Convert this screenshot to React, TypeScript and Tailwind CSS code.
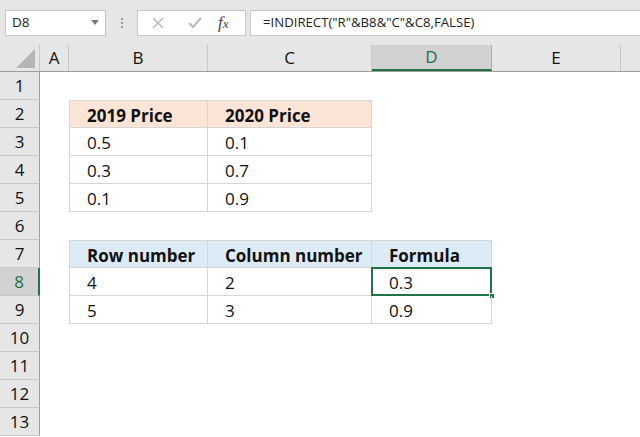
import { useState } from "react";

const COLS = [
  { key: "A", w: "w-[29px]" },
  { key: "B", w: "w-[139px]" },
  { key: "C", w: "w-[164px]" },
  { key: "D", w: "w-[120px]" },
  { key: "E", w: "w-[129px]" },
];

type Cell = { text?: string; bold?: boolean; bg?: string; border?: string };

// borders for the two little tables on the sheet
const T = "border-[#d6d6d6]";
const sheet: Record<number, Record<string, Cell>> = {
  2: {
    B: { text: "2019 Price", bold: true, bg: "bg-[#fce4d6]", border: `border-l border-t border-r border-b ${T}` },
    C: { text: "2020 Price", bold: true, bg: "bg-[#fce4d6]", border: `border-t border-r border-b ${T}` },
  },
  3: {
    B: { text: "0.5", border: `border-l border-r border-b ${T}` },
    C: { text: "0.1", border: `border-r border-b ${T}` },
  },
  4: {
    B: { text: "0.3", border: `border-l border-r border-b ${T}` },
    C: { text: "0.7", border: `border-r border-b ${T}` },
  },
  5: {
    B: { text: "0.1", border: `border-l border-r border-b ${T}` },
    C: { text: "0.9", border: `border-r border-b ${T}` },
  },
  7: {
    B: { text: "Row number", bold: true, bg: "bg-[#ddebf7]", border: `border-l border-t border-r border-b ${T}` },
    C: { text: "Column number", bold: true, bg: "bg-[#ddebf7]", border: `border-t border-r border-b ${T}` },
    D: { text: "Formula", bold: true, bg: "bg-[#ddebf7]", border: `border-t border-r border-b ${T}` },
  },
  8: {
    B: { text: "4", border: `border-l border-r border-b ${T}` },
    C: { text: "2", border: `border-r border-b ${T}` },
    D: { text: "0.3", border: `border-r border-b ${T}` },
  },
  9: {
    B: { text: "5", border: `border-l border-r border-b ${T}` },
    C: { text: "3", border: `border-r border-b ${T}` },
    D: { text: "0.9", border: `border-r border-b ${T}` },
  },
};

const ROWS = [1, 2, 3, 4, 5, 6, 7, 8, 9, 10, 11, 12, 13];

export default function App() {
  const [selected] = useState({ col: "D", row: 8 });

  return (
    <div className="w-[640px] h-[437px] overflow-hidden bg-white font-['Open_Sans',sans-serif] text-[#111]">
      {/* Formula bar */}
      <div className="h-[45px] bg-[#e6e6e6] flex items-center pl-[5px] gap-0">
        <div className="w-[101px] h-[26px] bg-white border border-[#c6c6c6] flex items-center justify-between pl-[6px] pr-[6px] text-[13.5px] text-[#222]">
          <span>D8</span>
          <svg width="8" height="5" viewBox="0 0 8 5">
            <path d="M0 0h8L4 5z" fill="#7a7a7a" />
          </svg>
        </div>
        <div className="w-[31px] flex flex-col items-center gap-[2px]">
          <span className="w-[2px] h-[2px] bg-[#9c9c9c]" />
          <span className="w-[2px] h-[2px] bg-[#9c9c9c]" />
          <span className="w-[2px] h-[2px] bg-[#9c9c9c]" />
        </div>
        <div className="w-[109px] h-[26px] bg-white border border-[#c6c6c6] flex items-center">
          <svg className="ml-[14px]" width="12" height="12" viewBox="0 0 12 12">
            <path d="M1 1l10 10M11 1L1 11" stroke="#b9b9b9" strokeWidth="1.5" />
          </svg>
          <svg className="ml-[24px]" width="14" height="11" viewBox="0 0 14 11">
            <path d="M1 6l4 4 8-9" stroke="#b9b9b9" strokeWidth="2" fill="none" />
          </svg>
          <span className="ml-[16px] text-[17px] leading-none italic font-['Liberation_Serif',serif] text-[#444]">
            f<span className="text-[13px]">x</span>
          </span>
        </div>
        <div className="ml-[4px] flex-1 h-[26px] bg-white border border-[#c6c6c6] border-r-0 flex items-center pl-[12px] text-[13.2px] text-[#222] whitespace-nowrap">
          =INDIRECT("R"&amp;B8&amp;"C"&amp;C8,FALSE)
        </div>
      </div>

      {/* Column headers */}
      <div className="flex h-[27px] bg-[#e6e6e6] border-b border-[#9e9e9e]">
        <div className="w-[40px] shrink-0 relative border-r border-[#c8c8c8]">
          <svg className="absolute right-[4px] bottom-[3px]" width="19" height="19" viewBox="0 0 19 19">
            <path d="M19 0V19H0z" fill="#b5b5b5" />
          </svg>
        </div>
        {COLS.map((c) => {
          const sel = c.key === selected.col;
          return (
            <div
              key={c.key}
              className={`${c.w} shrink-0 flex items-center justify-center text-[17px] border-r ${
                sel
                  ? "bg-[#d2d2d2] text-[#217346] border-[#ababab] border-b-2 border-b-[#217346]"
                  : "border-[#c8c8c8]"
              } ${c.key === "E" ? "border-[#a0a0a0]" : ""}`}
            >
              {c.key}
            </div>
          );
        })}
        <div className="flex-1" />
      </div>

      {/* Rows */}
      {ROWS.map((r) => {
        const rowSel = r === selected.row;
        return (
          <div key={r} className="flex h-[28px]">
            <div
              className={`w-[40px] shrink-0 flex items-center justify-center text-[17px] border-b border-b-[#c8c8c8] ${
                rowSel
                  ? "bg-[#d2d2d2] text-[#217346] border-r-2 border-r-[#217346]"
                  : "bg-[#e6e6e6] border-r border-r-[#9e9e9e]"
              }`}
            >
              {r}
            </div>
            {COLS.map((c) => {
              const cell = sheet[r]?.[c.key];
              const isSel = rowSel && c.key === selected.col;
              return (
                <div
                  key={c.key}
                  className={`${c.w} shrink-0 relative flex items-center pl-[17px] pt-[3px] text-[17px] whitespace-nowrap ${
                    cell?.bg ?? ""
                  } ${cell?.border ?? ""} ${cell?.bold ? "font-bold" : ""}`}
                >
                  {cell?.text}
                  {isSel && (
                    <>
                      <div className="absolute -left-px -top-px -right-px -bottom-px border-2 border-[#217346]" />
                      <div className="absolute -right-[4px] -bottom-[4px] w-[6px] h-[6px] bg-[#217346] border border-white" />
                    </>
                  )}
                </div>
              );
            })}
            <div className="flex-1" />
          </div>
        );
      })}
    </div>
  );
}
